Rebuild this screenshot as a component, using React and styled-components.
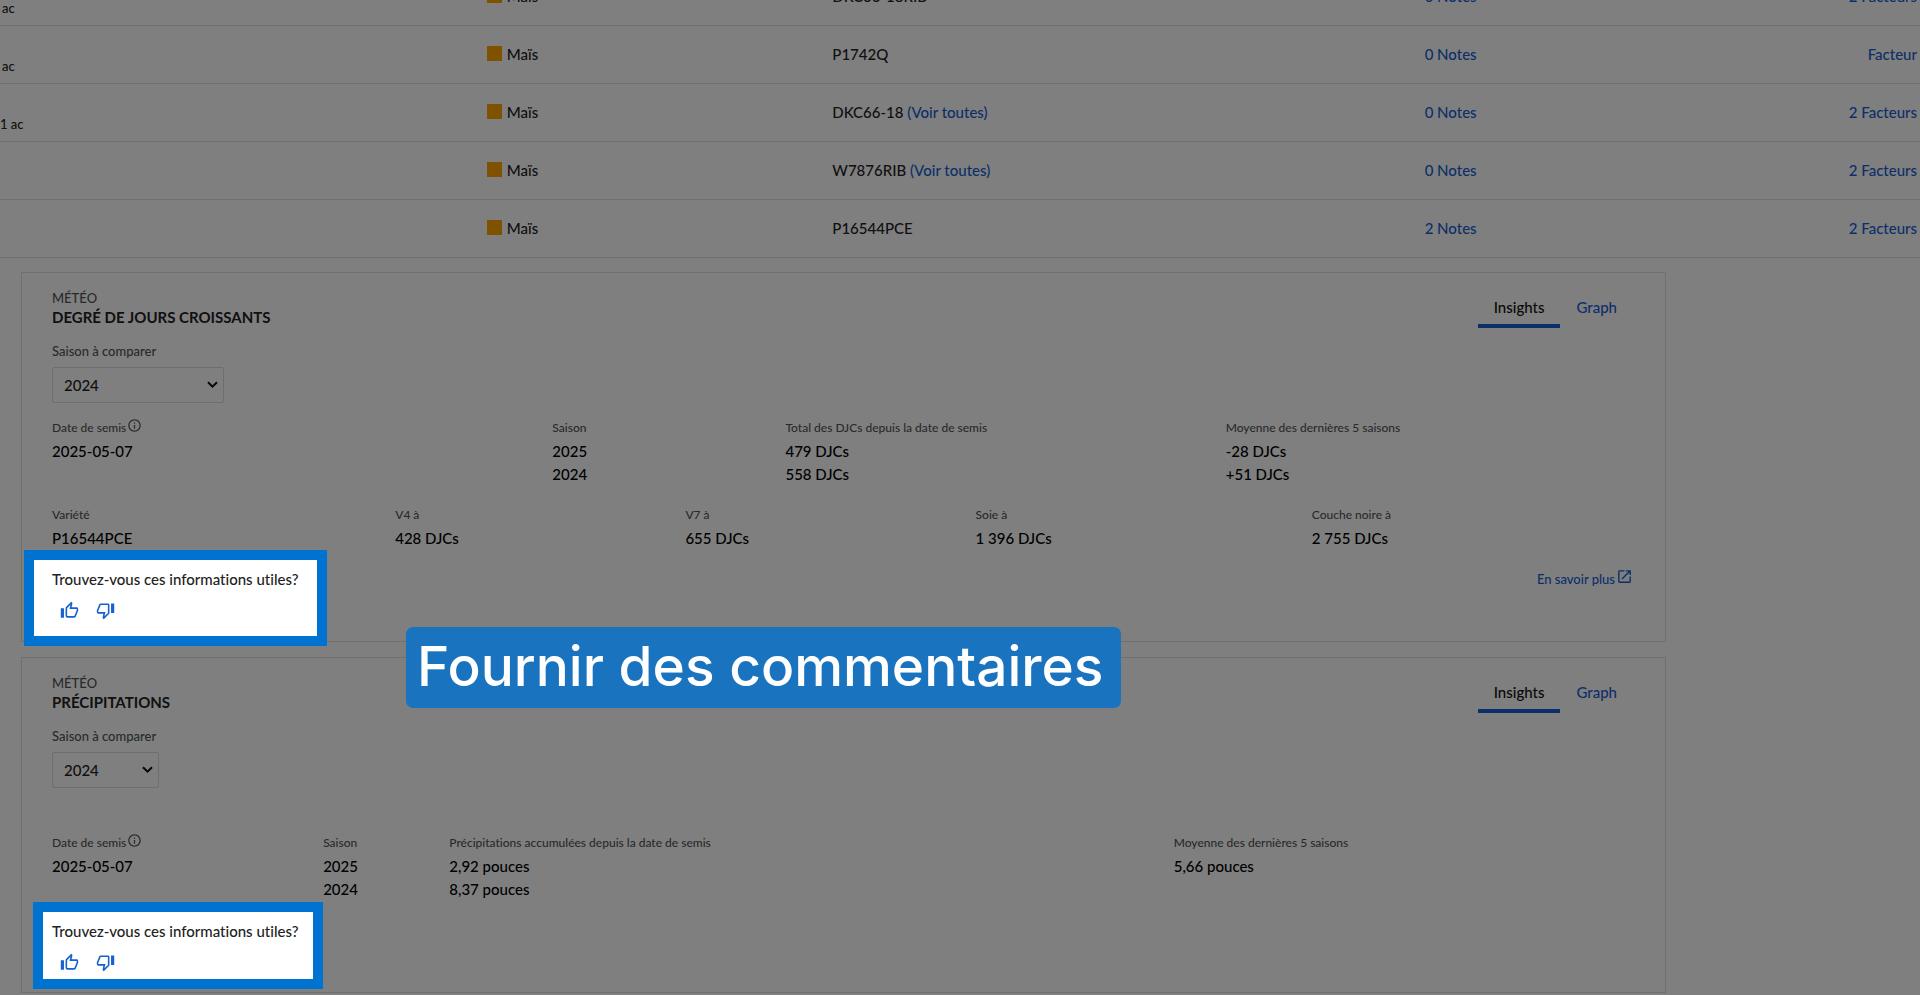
import React from 'react'
import styled, { createGlobalStyle } from 'styled-components'
import { MdInfoOutline, MdOpenInNew } from 'react-icons/md'


const GlobalStyle = createGlobalStyle`
* {
    box-sizing: border-box;
}
body {
    margin: 0;
    background: #fff;
    color: #222;
    font-family: Lato, "Liberation Sans", sans-serif;
    font-size: 15px;
    font-weight: 500;
    font-variant-ligatures: none;
    line-height: 22px;
}
a {
    color: #1760d2;
    text-decoration: none;
}
`

const Page = styled.div`
position: relative;
height: 100vh;
overflow: hidden;
`

const FieldTable = styled.table`
width: 100%;
margin-top: -32px;
margin-bottom: 14px;
border-collapse: separate;
border-spacing: 0;
table-layout: fixed;
    td {
        height: 58px;
        padding: 0 0 2px;
        border-bottom: 1px solid #e0e0e0;
        vertical-align: middle;
        white-space: nowrap;
    }
    td:last-child {
        padding-right: 3px;
        text-align: right;
    }
`

const Col = styled.col`
width: ${props => props.$width};
`

const Acres = styled.div`
padding-top: 24px;
padding-left: ${props => props.$long ? '0' : '2px'};
font-size: 13px;
`

const Crop = styled.div`
display: flex;
align-items: center;
column-gap: 5px;
    &::before {
        content: '';
        width: 15px;
        height: 15px;
        background: #ffa500;
    }
`

const Card = styled.section`
max-width: 1645px;
margin: 0 0 15px 21px;
padding: 15px 32px 0 30px;
border: 1px solid #e0e0e0;
min-height: ${props => props.$short ? '336px' : '370px'};
`

const CardHead = styled.header`
display: flex;
justify-content: space-between;
    p {
        margin: 0;
        font-size: 13px;
        line-height: 20px;
        color: #555;
    }
    h2 {
        margin: 0;
        font-size: 15px;
        line-height: 18px;
    }
`

const Tabs = styled.div`
display: flex;
align-items: flex-start;
`

const Tab = styled.button`
margin: 0;
padding: 8px 16px 6px;
border: 0;
border-bottom: 4px solid ${props => props.$active ? '#1760d2' : 'transparent'};
background: none;
color: ${props => props.$active ? '#111' : '#1760d2'};
font: inherit;
`

const Season = styled.div`
display: flex;
flex-direction: column;
align-items: flex-start;
margin-top: 14px;
    label {
        font-size: 13px;
        line-height: 18px;
        color: #555;
    }
`

const SelectBox = styled.div`
position: relative;
width: ${props => props.$wide ? '172px' : '107px'};
margin-top: 7px;
    select {
        width: 100%;
        height: 36px;
        padding: 0 11px 1px;
        border: 1px solid #ddd;
        border-radius: 2px;
        background: #fff;
        color: #222;
        font: inherit;
        appearance: none;
    }
    svg {
        position: absolute;
        right: 6px;
        top: 14px;
        pointer-events: none;
    }
`

const Stats = styled.dl`
display: grid;
grid-template-columns: ${props => props.$cols};
margin: ${props => props.$gap} 0 0;
    dt {
        font-size: 12px;
        line-height: 24px;
        color: #555;
    }
    dt svg {
        width: 15px;
        height: 15px;
        margin-left: 1px;
        vertical-align: -1px;
    }
    dd {
        margin: 0;
        line-height: 23px;
        color: #000;
    }
`

const CardFoot = styled.footer`
display: flex;
justify-content: space-between;
align-items: flex-start;
`

const Feedback = styled.div`
position: relative;
z-index: 2;
margin-top: ${props => props.$wide ? '10px' : '11px'};
margin-left: ${props => props.$wide ? '-18px' : '-9px'};
padding: ${props => props.$wide ? '8px 13px 16px 18px' : '8px 8px 7px 9px'};
width: ${props => props.$wide ? '283px' : '270px'};
background: #fff;
box-shadow: 0 0 0 10px #0073d1;
    p {
        margin: 0;
        line-height: 22px;
        white-space: nowrap;
    }
`

const Thumbs = styled.div`
display: flex;
column-gap: 17px;
margin-top: 11px;
padding-left: 8px;
    button {
        display: flex;
        padding: 0;
        border: 0;
        background: none;
        color: #1760d2;
    }
    svg {
        width: 19px;
        height: 19px;
    }
`

const LearnMore = styled.a`
display: flex;
column-gap: 1px;
margin-top: 18px;
font-size: 13px;
    svg {
        width: 17px;
        height: 17px;
    }
`

const Backdrop = styled.div`
position: absolute;
inset: 0;
z-index: 1;
background: rgba(0, 0, 0, 0.5);
`

const Callout = styled.div`
position: absolute;
z-index: 3;
left: 406px;
top: 627px;
padding: 0 18px 3px 11px;
border-radius: 7px;
background: #1a73be;
color: #fff;
font-family: Inter, sans-serif;
font-size: 55px;
line-height: 78px;
white-space: nowrap;
`

const rows = [
    { acres: 'ac', variety: 'DKC66-18RIB', notes: 0, factors: '2 Facteurs' },
    { acres: 'ac', variety: 'P1742Q', notes: 0, factors: 'Facteur' },
    { acres: '1 ac', variety: 'DKC66-18', more: true, notes: 0, factors: '2 Facteurs' },
    { variety: 'W7876RIB', more: true, notes: 0, factors: '2 Facteurs' },
    { variety: 'P16544PCE', notes: 2, factors: '2 Facteurs' },
]

const degreeDays = [
    { label: 'Date de semis', info: true, values: ['2025-05-07'] },
    { label: 'Saison', values: ['2025', '2024'] },
    { label: 'Total des DJCs depuis la date de semis', values: ['479 DJCs', '558 DJCs'] },
    { label: 'Moyenne des dernières 5 saisons', values: ['-28 DJCs', '+51 DJCs'] },
]

const stages = [
    { label: 'Variété', values: ['P16544PCE'] },
    { label: 'V4 à', values: ['428 DJCs'] },
    { label: 'V7 à', values: ['655 DJCs'] },
    { label: 'Soie à', values: ['1 396 DJCs'] },
    { label: 'Couche noire à', values: ['2 755 DJCs'] },
]

const rainfall = [
    { label: 'Date de semis', info: true, values: ['2025-05-07'] },
    { label: 'Saison', values: ['2025', '2024'] },
    { label: 'Précipitations accumulées depuis la date de semis', values: ['2,92 pouces', '8,37 pouces'] },
    { label: 'Moyenne des dernières 5 saisons', values: ['5,66 pouces'] },
]

const ThumbUp = () => (
    <svg viewBox='0 0 24 24' fill='currentColor'>
        <path d='M9 21h9c.83 0 1.54-.5 1.84-1.22l3.02-7.05c.09-.23.14-.47.14-.73v-2c0-1.1-.9-2-2-2h-6.31l.95-4.57.03-.32c0-.41-.17-.79-.44-1.06L14.17 1 7.58 7.59C7.22 7.95 7 8.45 7 9v10c0 1.1.9 2 2 2zM9 9l4.34-4.34L12 10h9v2l-3 7H9V9zM1 9h4v12H1z' />
    </svg>
)

const ThumbDown = () => (
    <svg viewBox='0 0 24 24' fill='currentColor'>
        <path d='M15 3H6c-.83 0-1.54.5-1.84 1.22l-3.02 7.05c-.09.23-.14.47-.14.73v2c0 1.1.9 2 2 2h6.31l-.95 4.57-.03.32c0 .41.17.79.44 1.06L9.83 23l6.59-6.59c.36-.36.58-.86.58-1.41V5c0-1.1-.9-2-2-2zm0 12l-4.34 4.34L12 14H3v-2l3-7h9v10zm4-12h4v12h-4z' />
    </svg>
)

const CardTop = ({ id, title, wide }) => (
    <>
        <CardHead>
            <div>
                <p>MÉTÉO</p>
                <h2>{title}</h2>
            </div>
            <Tabs role='tablist'>
                <Tab $active role='tab' aria-selected='true'>Insights</Tab>
                <Tab role='tab' aria-selected='false'>Graph</Tab>
            </Tabs>
        </CardHead>
        <Season>
            <label htmlFor={id}>Saison à comparer</label>
            <SelectBox $wide={wide}>
                <select id={id} defaultValue='2024'>
                    <option>2024</option>
                </select>
                <svg width='11' height='8' viewBox='0 0 11 8' fill='none' stroke='#111' strokeWidth='2'>
                    <path d='M1 1.2l4.5 4.5L10 1.2' />
                </svg>
            </SelectBox>
        </Season>
    </>
)

const StatRow = ({ items, cols, gap }) => (
    <Stats $cols={cols} $gap={gap}>
        {items.map(item => (
            <div key={item.label}>
                <dt>{item.label}{item.info && <MdInfoOutline />}</dt>
                {item.values.map(v => <dd key={v}>{v}</dd>)}
            </div>
        ))}
    </Stats>
)

const FeedbackBox = ({ wide }) => (
    <Feedback $wide={wide}>
        <p>Trouvez-vous ces informations utiles?</p>
        <Thumbs>
            <button aria-label='Oui'><ThumbUp /></button>
            <button aria-label='Non'><ThumbDown /></button>
        </Thumbs>
    </Feedback>
)

const App = () => {
    return (
        <Page>
            <GlobalStyle />
            <FieldTable>
                <colgroup>
                    <Col $width='25.35%' />
                    <Col $width='18%' />
                    <Col $width='30.85%' />
                    <col />
                    <col />
                </colgroup>
                <tbody>
                    {rows.map(row => (
                        <tr key={row.variety}>
                            <td>{row.acres && <Acres $long={row.acres !== 'ac'}>{row.acres}</Acres>}</td>
                            <td><Crop>Maïs</Crop></td>
                            <td>{row.variety} {row.more && <a href='#varietes'>(Voir toutes)</a>}</td>
                            <td><a href='#notes'>{row.notes} Notes</a></td>
                            <td><a href='#facteurs'>{row.factors}</a></td>
                        </tr>
                    ))}
                </tbody>
            </FieldTable>

            <Card>
                <CardTop id='saison-djc' title='DEGRÉ DE JOURS CROISSANTS' wide />
                <StatRow items={degreeDays} cols='500fr 233fr 440fr 407fr' gap='13px' />
                <StatRow items={stages} cols='343fr 290fr 290fr 336fr 321fr' gap='17px' />
                <CardFoot>
                    <FeedbackBox wide />
                    <LearnMore href='#savoir'>En savoir plus<MdOpenInNew /></LearnMore>
                </CardFoot>
            </Card>

            <Card $short>
                <CardTop id='saison-pluie' title='PRÉCIPITATIONS' />
                <StatRow items={rainfall} cols='271fr 126fr 724fr 459fr' gap='43px' />
                <CardFoot>
                    <FeedbackBox />
                </CardFoot>
            </Card>

            <Backdrop />
            <Callout>Fournir des commentaires</Callout>
        </Page>
    )
}

export default App
